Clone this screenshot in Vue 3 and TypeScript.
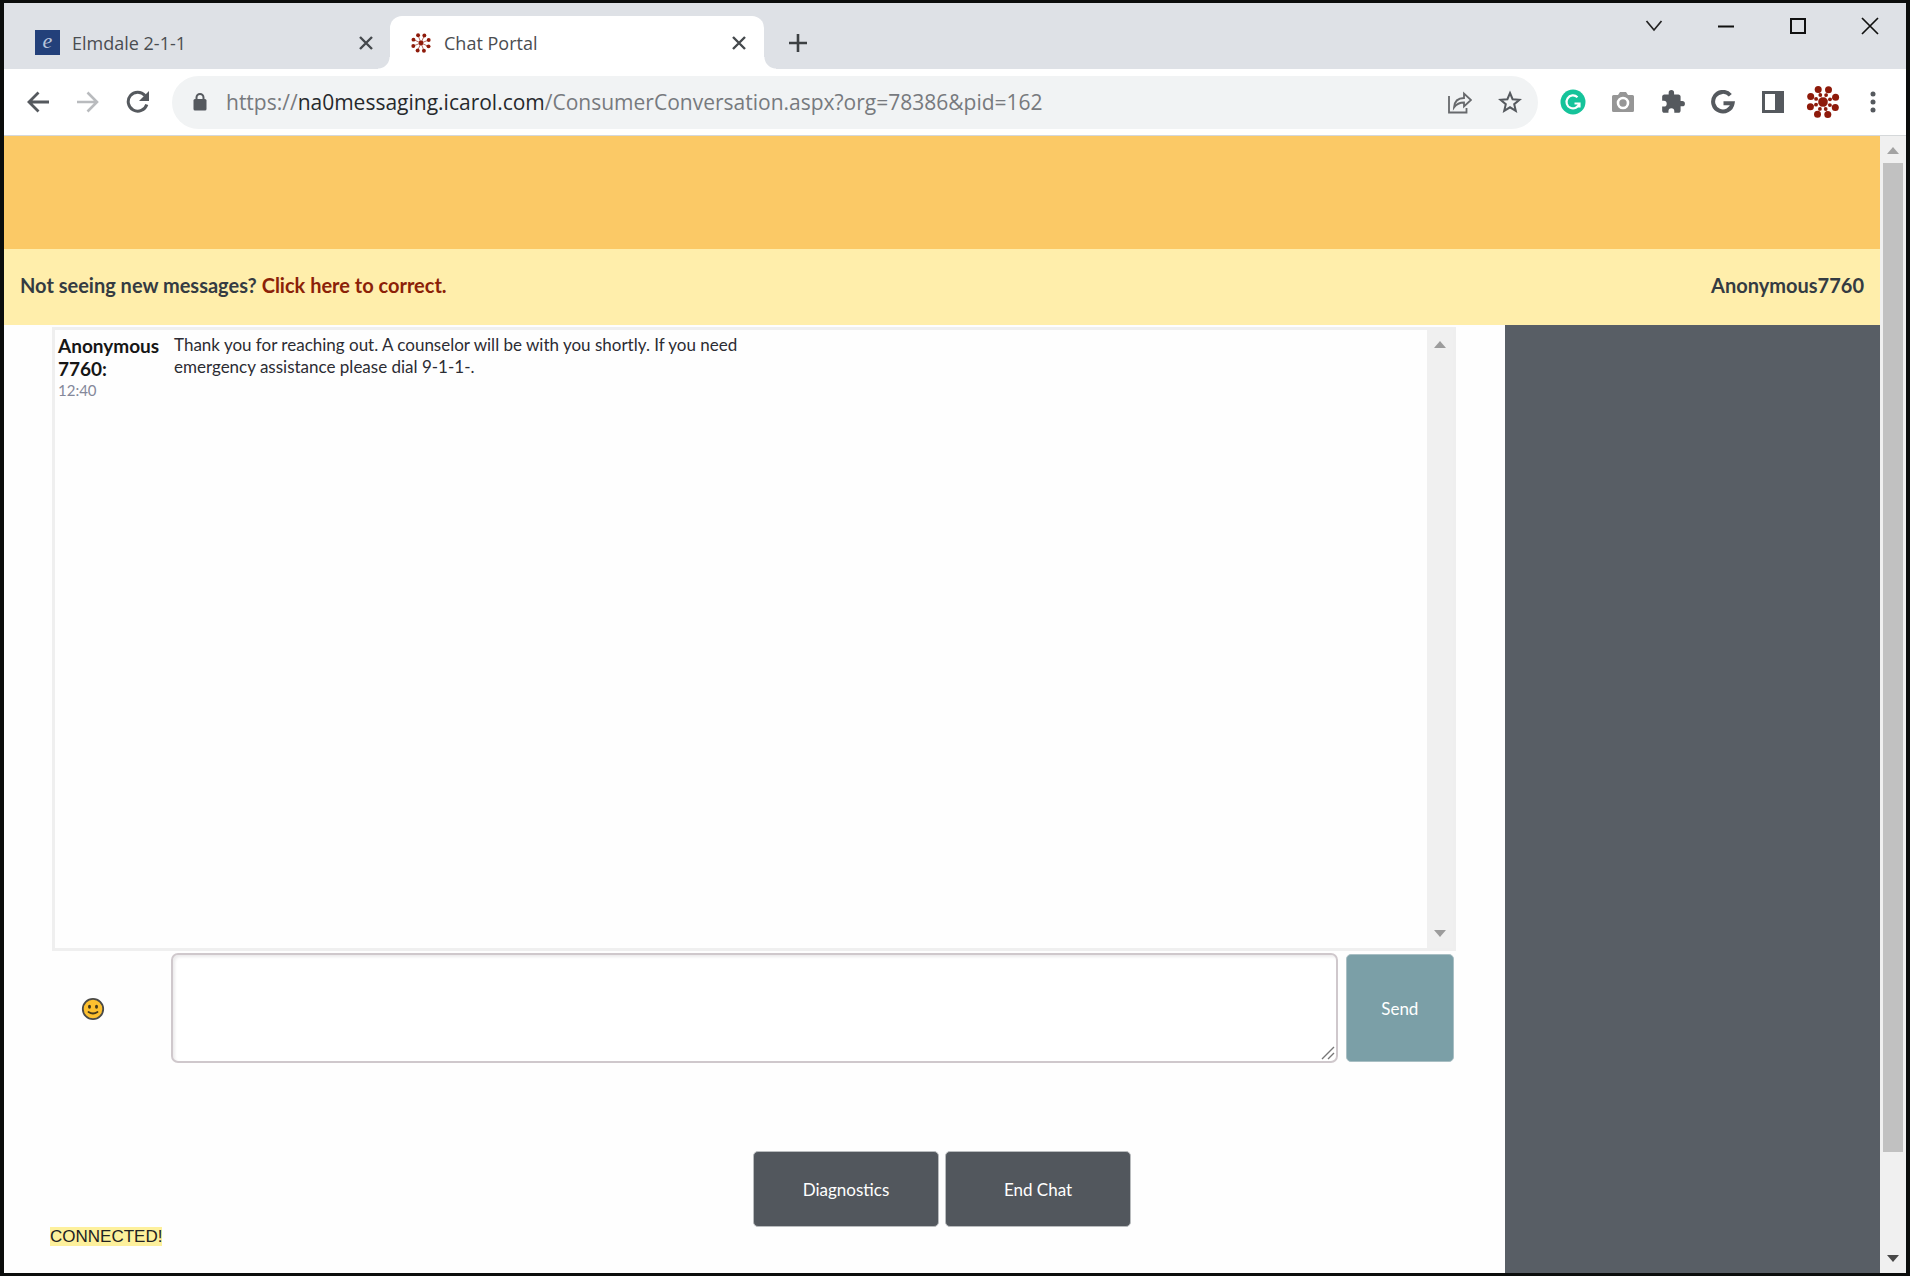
<script setup lang="ts">
import { ref } from 'vue'

const draft = ref('')

interface Dot { x: number; y: number }

// Eight spokes, evenly spaced and turned slightly off the vertical
function ring(radius: number): Dot[] {
  return Array.from({ length: 8 }, (_, i) => {
    const a = ((i * 45 - 66) * Math.PI) / 180
    return { x: Math.round(radius * Math.cos(a) * 10) / 10, y: Math.round(radius * Math.sin(a) * 10) / 10 }
  })
}
const outer = ring(13.5)
const inner = ring(7.5)
</script>

<template>
  <div class="window">
    <header class="tabs">
      <div class="tab">
        <span class="fav">e</span>
        <span class="title">Elmdale 2-1-1</span>
        <button class="icon close" aria-label="Close Elmdale 2-1-1">
          <svg width="14" height="14" viewBox="0 0 14 14"><path d="M1 1l12 12M13 1L1 13" stroke="#45494d" stroke-width="2.4" /></svg>
        </button>
      </div>
      <div class="tab active">
        <svg class="burst" width="22" height="22" viewBox="-18 -18 36 36">
          <g fill="#8e1a0a" stroke="#a8483b">
            <line v-for="(d, i) in outer" :key="'l' + i" x1="0" y1="0" :x2="d.x" :y2="d.y" stroke-width="1.3" />
            <circle v-for="(d, i) in outer" :key="'o' + i" :cx="d.x" :cy="d.y" r="3.2" stroke="none" />
            <circle r="4" stroke="none" />
          </g>
        </svg>
        <span class="title">Chat Portal</span>
        <button class="icon close" aria-label="Close Chat Portal">
          <svg width="14" height="14" viewBox="0 0 14 14"><path d="M1 1l12 12M13 1L1 13" stroke="#45494d" stroke-width="2.4" /></svg>
        </button>
      </div>
      <button class="icon plus" aria-label="New tab">
        <svg width="20" height="20" viewBox="0 0 20 20"><path d="M10 1v18M1 10h18" stroke="#3c4043" stroke-width="2.6" /></svg>
      </button>
      <div class="controls">
        <button class="icon" aria-label="Search tabs"><svg width="18" height="18" viewBox="0 0 18 18"><path d="M1.500 4l7.500 9 7.500-9" fill="none" stroke="#222" stroke-width="1.700" /></svg></button>
        <button class="icon" aria-label="Minimize"><svg width="18" height="18" viewBox="0 0 18 18"><path d="M1 9.500h16" stroke="#111" stroke-width="2" /></svg></button>
        <button class="icon" aria-label="Maximize"><svg width="18" height="18" viewBox="0 0 18 18"><rect x="2" y="2" width="14" height="14" fill="none" stroke="#111" stroke-width="2" /></svg></button>
        <button class="icon" aria-label="Close"><svg width="18" height="18" viewBox="0 0 18 18"><path d="M1 1l16 16M17 1L1 17" stroke="#111" stroke-width="1.700" /></svg></button>
      </div>
    </header>

    <nav class="toolbar">
      <button class="icon" aria-label="Back">
        <svg width="24" height="24" viewBox="0 0 24 24"><path d="M23 12H3M12.500 2.500L3 12l9.500 9.500" fill="none" stroke="#55595e" stroke-width="2.800" /></svg>
      </button>
      <button class="icon" aria-label="Forward">
        <svg width="24" height="24" viewBox="0 0 24 24"><path d="M1 12h20M11.500 2.500L21 12l-9.500 9.500" fill="none" stroke="#b9bbbe" stroke-width="2.600" /></svg>
      </button>
      <button class="icon" aria-label="Reload">
        <svg width="24" height="24" viewBox="0 0 24 24"><path d="M20.800 14.500A9.500 9.500 0 1 1 19 5.500" fill="none" stroke="#55595e" stroke-width="3" /><path d="M23 1v10H13z" fill="#55595e" /></svg>
      </button>
      <div class="address">
        <svg width="14" height="20" viewBox="0 0 14 20"><path d="M3.500 9V5.500a3.500 3.500 0 0 1 7 0V9" fill="none" stroke="#55595e" stroke-width="2" /><rect x="0.500" y="7" width="13" height="11.500" rx="1.500" fill="#55595e" /></svg>
        <span class="url">https://<b>na0messaging.icarol.com</b>/ConsumerConversation.aspx?org=78386&amp;pid=162</span>
        <button class="icon" aria-label="Share">
          <svg width="24" height="24" viewBox="0 0 24 24" fill="none" stroke="#67696c" stroke-width="1.800"><path d="M1 6v16.500h17.500V18" /><path d="M6 17.500c.5-6.500 3.500-9.500 10-9.500V3.500l7 6.500-7 6.500v-4c-5 0-7.500 1.500-10 5z" /></svg>
        </button>
        <button class="icon" aria-label="Bookmark">
          <svg width="24" height="24" viewBox="0 0 24 24"><path d="M12 3l2.600 6.200 6.900.6-5.300 4.400 1.600 6.700L12 17.300l-5.800 3.600 1.600-6.700-5.300-4.400 6.900-.6z" fill="none" stroke="#55595e" stroke-width="2" /></svg>
        </button>
      </div>
      <div class="extensions">
        <button class="icon" aria-label="Grammar">
          <svg width="26" height="26" viewBox="0 0 26 26"><circle cx="13" cy="13" r="12.500" fill="#15c39a" /><path d="M17.500 8.200A6.500 6.500 0 1 0 19.300 14.500H14.500M19.500 14v4.500" fill="none" stroke="#fff" stroke-width="2.200" /></svg>
        </button>
        <button class="icon" aria-label="Screenshot">
          <svg width="24" height="24" viewBox="0 0 24 24"><path d="M2.500 5H7l2-3h6l2 3h4.500Q23 5 23 6.500v14q0 1.500-1.500 1.500h-19Q1 22 1 20.500v-14Q1 5 2.500 5z" fill="#969696" /><circle cx="12" cy="13" r="5" fill="none" stroke="#fff" stroke-width="2.600" /></svg>
        </button>
        <button class="icon" aria-label="Extensions">
          <svg width="26" height="26" viewBox="0 0 24 24"><path d="M20.500 11H19V7c0-1.100-.9-2-2-2h-4V3.500a2.500 2.500 0 0 0-5 0V5H4c-1.100 0-2 .9-2 2v3.800h1.500a2.700 2.700 0 0 1 0 5.400H2V20c0 1.100.9 2 2 2h3.800v-1.500a2.700 2.700 0 0 1 5.400 0V22H17c1.100 0 2-.9 2-2v-4h1.500a2.500 2.500 0 0 0 0-5z" fill="#55595e" /></svg>
        </button>
        <button class="icon" aria-label="Google">
          <svg width="24" height="24" viewBox="0 0 24 24"><path d="M19.300 5.200A9.800 9.800 0 1 0 21.600 13.300H12.500" fill="none" stroke="#55595e" stroke-width="4" /></svg>
        </button>
        <button class="icon" aria-label="Side panel">
          <svg width="24" height="24" viewBox="0 0 24 24"><path d="M1 1h22v22H1zM4 4v16h10V4z" fill="#55595e" fill-rule="evenodd" /></svg>
        </button>
        <button class="icon" aria-label="Profile">
          <svg width="36" height="36" viewBox="-18 -18 36 36" fill="#8e1a0a">
            <line v-for="(d, i) in outer" :key="'l' + i" x1="0" y1="0" :x2="d.x" :y2="d.y" stroke="#d9a49b" stroke-width="1" />
            <circle v-for="(d, i) in outer" :key="'o' + i" :cx="d.x" :cy="d.y" r="3.500" />
            <circle v-for="(d, i) in inner" :key="'i' + i" :cx="d.x" :cy="d.y" r="1.900" />
            <circle r="4.800" />
          </svg>
        </button>
        <button class="icon" aria-label="Menu">
          <svg width="6" height="24" viewBox="0 0 6 24" fill="#55595e"><circle cx="3" cy="4" r="2.500" /><circle cx="3" cy="12" r="2.500" /><circle cx="3" cy="20" r="2.500" /></svg>
        </button>
      </div>
    </nav>

    <div class="viewport">
      <div class="page">
        <div class="banner"></div>
        <div class="notice">
          <span>Not seeing new messages? <a href="#">Click here to correct.</a></span>
          <span>Anonymous7760</span>
        </div>
        <div class="columns">
          <main>
            <section class="log">
              <div class="message">
                <div class="sender"><strong>Anonymous<wbr />7760:</strong><time>12:40</time></div>
                <p>Thank you for reaching out. A counselor will be with you shortly. If you need emergency assistance please dial 9-1-1-.</p>
              </div>
              <div class="bar inner">
                <svg width="12" height="7" viewBox="0 0 12 7"><path d="M6 0l6 7H0z" fill="#9c9c9c" /></svg>
                <svg width="12" height="7" viewBox="0 0 12 7"><path d="M6 7l6-7H0z" fill="#9c9c9c" /></svg>
              </div>
            </section>
            <form class="compose" @submit.prevent>
              <button type="button" class="icon emoji" aria-label="Insert emoji">
                <svg width="24" height="24" viewBox="0 0 24 24"><circle cx="12" cy="12" r="10.200" fill="#fdc02f" stroke="#4a4a48" stroke-width="1.800" /><ellipse cx="8.500" cy="9.800" rx="1.500" ry="2" fill="#46391a" /><ellipse cx="15.500" cy="9.800" rx="1.500" ry="2" fill="#46391a" /><path d="M7.500 15q4.500 3 9 0" fill="none" stroke="#46391a" stroke-width="1.800" stroke-linecap="round" /></svg>
              </button>
              <div class="field">
                <textarea v-model="draft" aria-label="Message"></textarea>
                <svg class="grip" width="14" height="14" viewBox="0 0 14 14"><path d="M1 13L13 1M7 13l6-6" stroke="#777" stroke-width="1.400" /></svg>
              </div>
              <button class="send">Send</button>
            </form>
            <div class="actions">
              <button>Diagnostics</button>
              <button>End Chat</button>
            </div>
            <div class="status"><span>CONNECTED!</span></div>
          </main>
          <aside></aside>
        </div>
      </div>
      <div class="bar outer">
        <svg width="12" height="7" viewBox="0 0 12 7"><path d="M6 0l6 7H0z" fill="#a3a3a3" /></svg>
        <div class="track"><div class="thumb"></div></div>
        <svg width="12" height="7" viewBox="0 0 12 7"><path d="M6 7l6-7H0z" fill="#484848" /></svg>
      </div>
    </div>
  </div>
</template>

<style>
body { margin: 0; }
</style>

<style scoped>
* { box-sizing: border-box; }
.window {
  display: flex;
  flex-direction: column;
  min-height: 100vh;
  border: 3px solid #0b0d0c;
  border-left-width: 4px;
  border-right-width: 4px;
  background: #fefefe;
  font-family: "Lato", "Liberation Sans", sans-serif;
  color: #222;
}
button { font-family: inherit; cursor: pointer; }
svg { display: block; flex: none; }
.icon {
  display: flex;
  align-items: center;
  justify-content: center;
  padding: 0;
  border: 0;
  background: none;
}
.tabs {
  display: flex;
  align-items: flex-end;
  height: 66px;
  background: #dee1e6;
  font-family: "Open Sans", "Noto Sans", sans-serif;
  font-size: 18px;
  color: #4a4d51;
}
.tab {
  position: relative;
  display: flex;
  align-items: center;
  width: 386px;
  height: 53px;
  padding: 0 17px 0 31px;
}
.tab.active {
  width: 374px;
  padding: 0 18px 0 20px;
  border-radius: 12px 12px 0 0;
  background: #fff;
}
.tab.active::before,
.tab.active::after {
  content: "";
  position: absolute;
  bottom: 0;
  width: 12px;
  height: 12px;
}
.tab.active::before { right: 100%; background: radial-gradient(circle at 0 0, transparent 11px, #fff 12px); }
.tab.active::after { left: 100%; background: radial-gradient(circle at 100% 0, transparent 11px, #fff 12px); }
.fav {
  width: 25px;
  height: 25px;
  background: #23407a;
  color: #b9c4da;
  font: italic 22px/22px "Liberation Serif", serif;
  text-align: center;
}
.title { flex: 1; margin-left: 12px; line-height: 26px; }
.close { width: 14px; height: 24px; }
.plus { width: 24px; height: 53px; margin-left: 22px; }
.controls { display: flex; gap: 54px; align-self: flex-start; margin-left: auto; padding: 14px 27px 0 0; }
.toolbar {
  display: flex;
  align-items: center;
  gap: 26px;
  height: 67px;
  padding: 0 21px 0 22px;
  border-bottom: 1px solid #d5d8da;
  background: #fff;
}
.address {
  display: flex;
  flex: 1;
  align-items: center;
  gap: 26px;
  height: 53px;
  margin-left: -4px;
  padding: 0 16px 0 21px;
  border-radius: 27px;
  background: #f1f3f4;
}
.url {
  flex: 1;
  margin-left: -7px;
  font: 21px/28px "Open Sans", "Noto Sans", sans-serif;
  color: #777a7e;
}
.url b { font-weight: 400; color: #26292c; }
.extensions { display: flex; align-items: center; gap: 26px; margin-left: -3px; }
.extensions .icon { width: 24px; }
.viewport { display: flex; flex: 1; }
.page { display: flex; flex: 1; flex-direction: column; }
.banner { height: 113px; background: #fbc966; }
.notice {
  display: flex;
  align-items: center;
  justify-content: space-between;
  height: 76px;
  padding: 0 16px 4px;
  background: #ffeeab;
  font-size: 20px;
  font-weight: 700;
  color: #343b42;
}
.notice a { color: #8b2107; text-decoration: none; }
.columns { display: flex; flex: 1; }
main { display: flex; flex: 1; flex-direction: column; }
aside { width: 20%; background: #585e65; }
.log {
  display: flex;
  flex: 1;
  justify-content: space-between;
  min-height: 300px;
  margin: 2px 49px 0 48px;
  border: 3px solid #efefef;
}
.message { display: flex; gap: 12px; padding: 4px 0 0 3px; }
.sender { display: flex; flex-direction: column; width: 104px; font-size: 19px; line-height: 23px; }
.sender strong { color: #161616; }
.sender time { font-size: 15px; line-height: 20px; color: #84889a; }
.message p { width: 600px; margin: 0; font-size: 17px; line-height: 22px; color: #2c2c33; }
.bar {
  display: flex;
  flex-direction: column;
  align-items: center;
  justify-content: space-between;
  background: #f0f0f0;
}
.bar.inner { width: 26px; padding: 11px 0; }
.compose { display: flex; gap: 8px; margin: 2px 51px 0 48px; }
.emoji { width: 81px; padding-top: 2px; }
.field { position: relative; flex: 1; height: 110px; margin-left: 30px; }
textarea {
  display: block;
  width: 100%;
  height: 100%;
  padding: 8px;
  resize: none;
  border: 2px solid #cfc8cc;
  border-radius: 7px;
  background: #fff;
  box-shadow: inset 2px 2px 3px #ecebec;
  font: 17px/22px "Lato", sans-serif;
}
.grip { position: absolute; right: 3px; bottom: 3px; }
.send,
.actions button {
  border: 1px solid #b9bcbe;
  border-radius: 5px;
  color: #fff;
  font-size: 17px;
}
.send { width: 108px; height: 108px; margin-top: 1px; background: #7b9fa7; border-color: #a9bfc4; }
.actions { display: flex; gap: 6px; justify-content: center; margin-top: 88px; padding-left: 25%; }
.actions button { width: 186px; height: 76px; background: #52575d; }
.status { height: 46px; padding-left: 46px; font: 17px/19px "Liberation Sans", sans-serif; }
.status span { display: inline-block; background: #fdf09c; }
.bar.outer { width: 26px; padding: 11px 0 11px; }
.track { flex: 1; width: 20px; margin: 9px 0; }
.thumb { height: 91.3%; background: #c1c1c1; }
</style>
